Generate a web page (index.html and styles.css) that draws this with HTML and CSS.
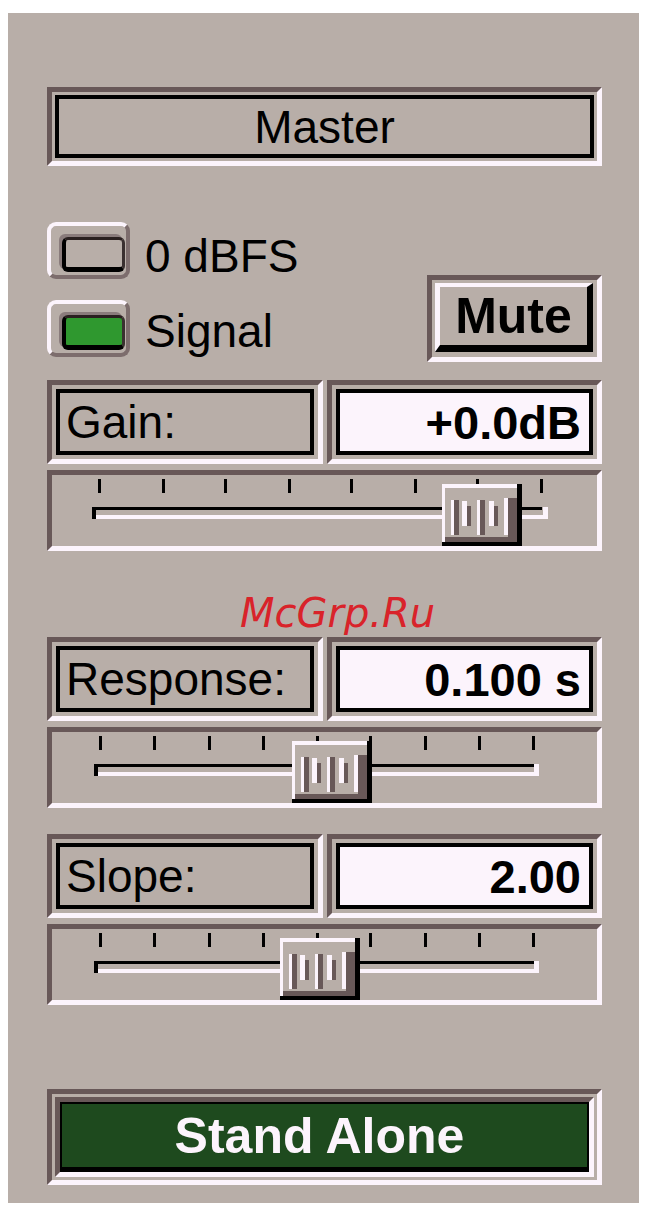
FILE: index.html
```html
<!DOCTYPE html>
<html>
<head>
<meta charset="utf-8">
<title>Master</title>
<link rel="stylesheet" href="styles.css">
</head>
<body>
<div class="panel">
  <div class="etch master-frame"><div class="box master">Master</div></div>

  <div class="status">
    <div class="leds">
      <div class="led-row r1">
        <span class="led"><span class="lamp"></span></span>
        <span class="led-label">0 dBFS</span>
      </div>
      <div class="led-row r2">
        <span class="led"><span class="lamp on"></span></span>
        <span class="led-label">Signal</span>
      </div>
    </div>
    <div class="etch mute-frame"><div class="btn mute">Mute</div></div>
  </div>

  <div class="field-row first">
    <div class="etch cell"><div class="box label">Gain:</div></div>
    <div class="etch cell"><div class="box value">+0.0dB</div></div>
  </div>
  <div class="etch slider">
    <svg width="545" height="71" viewBox="0 0 545 71">
      <g fill="#000">
        <rect x="46" y="4" width="3" height="14"/><rect x="110" y="4" width="3" height="14"/>
        <rect x="172" y="4" width="3" height="14"/><rect x="236" y="4" width="3" height="14"/>
        <rect x="298" y="4" width="3" height="14"/><rect x="362" y="4" width="3" height="14"/>
        <rect x="424" y="4" width="3" height="14"/><rect x="488" y="4" width="3" height="14"/>
      </g>
      <rect x="40" y="32" width="450" height="3" fill="#000"/>
      <rect x="40" y="32" width="4" height="12" fill="#000"/>
      <rect x="44" y="40" width="452" height="4" fill="#fcf4fc"/>
      <rect x="491" y="32" width="5" height="12" fill="#fcf4fc"/>
      <g transform="translate(390,9)">
        <rect width="80" height="62" fill="#b8aea8"/>
        <rect width="75" height="4" fill="#fcf4fc"/>
        <rect width="3" height="58" fill="#fcf4fc"/>
        <rect x="3" y="53" width="72" height="5" fill="#685858"/>
        <rect x="75" y="0" width="5" height="62" fill="#000"/>
        <rect x="0" y="58" width="80" height="4" fill="#000"/>
        <rect x="9" y="16" width="3" height="35" fill="#fcf4fc"/>
        <rect x="12" y="16" width="5" height="35" fill="#685858"/>
        <rect x="20" y="17" width="5" height="25" fill="#fcf4fc"/>
        <rect x="25" y="22" width="4" height="20" fill="#685858"/>
        <rect x="35" y="16" width="3" height="35" fill="#fcf4fc"/>
        <rect x="38" y="16" width="5" height="35" fill="#685858"/>
        <rect x="47" y="17" width="5" height="25" fill="#fcf4fc"/>
        <rect x="52" y="22" width="4" height="20" fill="#685858"/>
        <rect x="62" y="14" width="4" height="37" fill="#fcf4fc"/>
        <rect x="66" y="14" width="9" height="42" fill="#685858"/>
      </g>
    </svg>
  </div>

  <div class="watermark">McGrp.Ru</div>

  <div class="field-row">
    <div class="etch cell"><div class="box label">Response:</div></div>
    <div class="etch cell"><div class="box value">0.100 s</div></div>
  </div>
  <div class="etch slider">
    <svg width="545" height="71" viewBox="0 0 545 71">
      <g fill="#000">
        <rect x="47" y="4" width="3" height="14"/><rect x="101" y="4" width="3" height="14"/>
        <rect x="156" y="4" width="3" height="14"/><rect x="210" y="4" width="3" height="14"/>
        <rect x="264" y="4" width="3" height="14"/><rect x="317" y="4" width="3" height="14"/>
        <rect x="372" y="4" width="3" height="14"/><rect x="426" y="4" width="3" height="14"/>
        <rect x="480" y="4" width="3" height="14"/>
      </g>
      <rect x="42" y="32" width="440" height="3" fill="#000"/>
      <rect x="42" y="32" width="4" height="12" fill="#000"/>
      <rect x="46" y="40" width="441" height="4" fill="#fcf4fc"/>
      <rect x="482" y="32" width="5" height="12" fill="#fcf4fc"/>
      <g transform="translate(240,9)">
        <rect width="80" height="62" fill="#b8aea8"/>
        <rect width="75" height="4" fill="#fcf4fc"/>
        <rect width="3" height="58" fill="#fcf4fc"/>
        <rect x="3" y="53" width="72" height="5" fill="#685858"/>
        <rect x="75" y="0" width="5" height="62" fill="#000"/>
        <rect x="0" y="58" width="80" height="4" fill="#000"/>
        <rect x="9" y="16" width="3" height="35" fill="#fcf4fc"/>
        <rect x="12" y="16" width="5" height="35" fill="#685858"/>
        <rect x="20" y="17" width="5" height="25" fill="#fcf4fc"/>
        <rect x="25" y="22" width="4" height="20" fill="#685858"/>
        <rect x="35" y="16" width="3" height="35" fill="#fcf4fc"/>
        <rect x="38" y="16" width="5" height="35" fill="#685858"/>
        <rect x="47" y="17" width="5" height="25" fill="#fcf4fc"/>
        <rect x="52" y="22" width="4" height="20" fill="#685858"/>
        <rect x="62" y="14" width="4" height="37" fill="#fcf4fc"/>
        <rect x="66" y="14" width="9" height="42" fill="#685858"/>
      </g>
    </svg>
  </div>

  <div class="field-row second">
    <div class="etch cell"><div class="box label">Slope:</div></div>
    <div class="etch cell"><div class="box value">2.00</div></div>
  </div>
  <div class="etch slider">
    <svg width="545" height="71" viewBox="0 0 545 71">
      <g fill="#000">
        <rect x="47" y="4" width="3" height="14"/><rect x="101" y="4" width="3" height="14"/>
        <rect x="156" y="4" width="3" height="14"/><rect x="210" y="4" width="3" height="14"/>
        <rect x="264" y="4" width="3" height="14"/><rect x="317" y="4" width="3" height="14"/>
        <rect x="372" y="4" width="3" height="14"/><rect x="426" y="4" width="3" height="14"/>
        <rect x="480" y="4" width="3" height="14"/>
      </g>
      <rect x="42" y="32" width="440" height="3" fill="#000"/>
      <rect x="42" y="32" width="4" height="12" fill="#000"/>
      <rect x="46" y="40" width="441" height="4" fill="#fcf4fc"/>
      <rect x="482" y="32" width="5" height="12" fill="#fcf4fc"/>
      <g transform="translate(228,9)">
        <rect width="80" height="62" fill="#b8aea8"/>
        <rect width="75" height="4" fill="#fcf4fc"/>
        <rect width="3" height="58" fill="#fcf4fc"/>
        <rect x="3" y="53" width="72" height="5" fill="#685858"/>
        <rect x="75" y="0" width="5" height="62" fill="#000"/>
        <rect x="0" y="58" width="80" height="4" fill="#000"/>
        <rect x="9" y="16" width="3" height="35" fill="#fcf4fc"/>
        <rect x="12" y="16" width="5" height="35" fill="#685858"/>
        <rect x="20" y="17" width="5" height="25" fill="#fcf4fc"/>
        <rect x="25" y="22" width="4" height="20" fill="#685858"/>
        <rect x="35" y="16" width="3" height="35" fill="#fcf4fc"/>
        <rect x="38" y="16" width="5" height="35" fill="#685858"/>
        <rect x="47" y="17" width="5" height="25" fill="#fcf4fc"/>
        <rect x="52" y="22" width="4" height="20" fill="#685858"/>
        <rect x="62" y="14" width="4" height="37" fill="#fcf4fc"/>
        <rect x="66" y="14" width="9" height="42" fill="#685858"/>
      </g>
    </svg>
  </div>

  <div class="etch sa-frame"><div class="sa-btn"><div class="sa-face">Stand Alone</div></div></div>
</div>
</body>
</html>
```
FILE: styles.css
```css
html, body {
  margin: 0;
  padding: 0;
  background: #ffffff;
}
body {
  font-family: "Liberation Sans", Arial, sans-serif;
  color: #000;
}
.panel {
  margin: 13px 0 0 8px;
  width: 631px;
  height: 1190px;
  box-sizing: border-box;
  background: #b8aea8;
  padding: 74px 0 0 39px;
  display: flex;
  flex-direction: column;
}
.etch {
  box-sizing: border-box;
  border: 5px solid;
  border-color: #685858 #fcf4fc #fcf4fc #685858;
}
.box {
  box-sizing: border-box;
  height: 100%;
  border: 4px solid #000;
  display: flex;
  align-items: center;
}

/* Master */
.master-frame {
  width: 555px;
  height: 79px;
  padding: 3px;
}
.master {
  justify-content: center;
  font-size: 46px;
}

/* LEDs + Mute */
.status {
  margin-top: 56px;
  width: 555px;
  height: 140px;
  display: flex;
  justify-content: space-between;
  align-items: flex-start;
}
.leds {
  display: flex;
  flex-direction: column;
  gap: 21px;
}
.led-row {
  display: flex;
  align-items: flex-start;
  height: 57px;
}
.led {
  box-sizing: border-box;
  width: 83px;
  height: 57px;
  display: flex;
  border: 4px solid;
  border-color: #fcf4fc #7d6d6d #7d6d6d #fcf4fc;
  border-radius: 9px;
  padding: 11px 1px 3px 11px;
}
.lamp {
  flex: 1;
  box-sizing: border-box;
  border-style: solid;
  border-width: 3px 3px 5px 4px;
  border-color: #2a2020 #3a3030 #000 #000;
  border-radius: 6px;
  background: #b8aea8;
  box-shadow: -3px -3px 0 0 #8a7c7c;
}
.lamp.on {
  background: #2f982f;
}
.led-label {
  font-size: 46px;
  line-height: 51px;
  margin-left: 15px;
}
.r1 .led-label { margin-top: 9px; }
.r2 .led-label { margin-top: 6px; }

.mute-frame {
  align-self: flex-end;
  width: 175px;
  height: 87px;
  padding: 3px 4px 5px 3px;
}
.btn {
  box-sizing: border-box;
  height: 100%;
  border-style: solid;
  border-width: 4px 6px 7px 5px;
  border-color: #fcf4fc #000 #000 #fcf4fc;
  display: flex;
  align-items: center;
  justify-content: center;
  font-weight: bold;
  font-size: 50px;
}

/* Parameter rows */
.field-row {
  display: grid;
  grid-template-columns: 276px 275px;
  column-gap: 4px;
  width: 555px;
  height: 84px;
}
.field-row.first { margin-top: 18px; }
.field-row.second { margin-top: 26px; }
.cell {
  padding: 4px;
}
.label {
  font-size: 46px;
  padding-left: 6px;
}
.value {
  background: #fcf4fc;
  justify-content: flex-end;
  padding-right: 8px;
  font-weight: bold;
  font-size: 47px;
}
.slider {
  margin-top: 6px;
  width: 555px;
  height: 81px;
}
.slider svg {
  display: block;
}

/* Watermark */
.watermark {
  box-sizing: border-box;
  height: 86px;
  padding: 42px 0 0 193px;
  font-family: "DejaVu Sans", sans-serif;
  font-style: italic;
  font-size: 40px;
  line-height: 40px;
  color: #d9232a;
}

/* Stand Alone */
.sa-frame {
  margin-top: 84px;
  width: 555px;
  height: 96px;
  padding: 3px;
}
.sa-btn {
  box-sizing: border-box;
  height: 100%;
  border: 5px solid;
  border-color: #685858 #fcf4fc #fcf4fc #685858;
}
.sa-face {
  box-sizing: border-box;
  height: 100%;
  background: #1e4a1e;
  border-style: solid;
  border-width: 2px 2px 5px 2px;
  border-color: #000;
  display: flex;
  align-items: center;
  justify-content: center;
  padding-right: 10px;
  color: #fcf4fc;
  font-weight: bold;
  font-size: 50px;
}
```
